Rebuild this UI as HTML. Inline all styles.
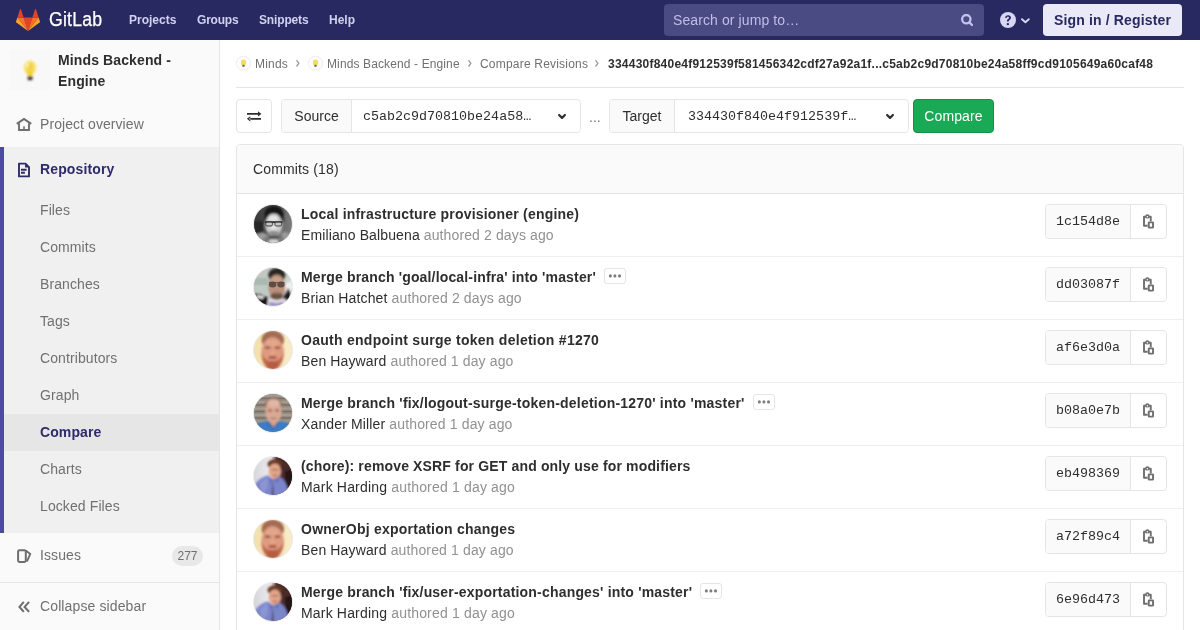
<!DOCTYPE html>
<html>
<head>
<meta charset="utf-8">
<title>Compare Revisions</title>
<style>
*{box-sizing:border-box;margin:0;padding:0}
html,body{width:1200px;height:630px;overflow:hidden;background:#fff}
body{font-family:"Liberation Sans",sans-serif;font-size:14px;color:#2e2e2e;position:relative}
#root{position:absolute;left:0;top:0;width:1200px;height:630px;overflow:hidden;will-change:transform;background:#fff}
.abs{position:absolute}
/* header */
#hdr{position:absolute;left:0;top:0;width:1200px;height:40px;background:#292961}
#hdr .nav{position:absolute;top:12px;height:16px;line-height:16px;font-size:12px;font-weight:700;color:#d1d1f0;white-space:nowrap}
#wordmark{position:absolute;left:49px;top:7px;font-size:20px;line-height:24px;color:#fff;letter-spacing:.2px;white-space:nowrap;transform:scaleX(.885);transform-origin:0 0;-webkit-text-stroke:.25px #fff}
#search{position:absolute;left:664px;top:4px;width:320px;height:32px;border-radius:4px;background:#4b4b83}
#search span{position:absolute;left:9px;top:7px;line-height:18px;font-size:14px;color:#bebee8;white-space:nowrap;letter-spacing:.1px}
#signin{position:absolute;left:1043px;top:4px;width:139px;height:32px;border-radius:4px;background:#e9e9f8;color:#292961;font-weight:700;font-size:14px;line-height:32px;text-align:center;white-space:nowrap;letter-spacing:.15px}
/* sidebar */
#side{position:absolute;left:0;top:40px;width:220px;height:590px;background:#fafafa;border-right:1px solid #e5e5e5}
#side .act{position:absolute;left:0;top:107px;width:219px;height:386px;background:#f0f0f0;border-left:4px solid #4b4ba3}
#side .cur{position:absolute;left:4px;top:374px;width:215px;height:37px;background:#e6e6e6}
#side .it{position:absolute;left:40px;height:20px;line-height:20px;font-size:14px;color:#707070;white-space:nowrap;letter-spacing:.1px}
#side .it.b{font-weight:700;color:#2f2a6b}
#side .ctx{position:absolute;left:58px;top:10px;font-weight:700;font-size:14px;line-height:21px;color:#2e2e2e;letter-spacing:.12px}
#side .pav{position:absolute;left:10px;top:10px;width:40px;height:40px;border-radius:3px;background:#f8f8f8}
#side .badge{position:absolute;left:172px;top:506px;width:31px;height:20px;border-radius:10px;background:#e8e8e8;color:#707070;font-size:12px;line-height:21px;text-align:center}
#side .coll{position:absolute;left:0;top:542px;width:219px;height:48px;border-top:1px solid #e5e5e5;background:#fafafa}
/* breadcrumbs */
#bc{position:absolute;left:236px;top:40px;width:948px;height:48px;border-bottom:1px solid #e5e5e5}
#bc .t{position:absolute;top:16px;height:16px;line-height:16px;font-size:12px;color:#707070;white-space:nowrap}
#bc .t.b{font-weight:700;color:#2e2e2e}
#bc .av{position:absolute;top:15px;width:16px;height:16px;border-radius:50%;border:1px solid #ececec;background:#fbfbf7}
/* form */
.box{position:absolute;border:1px solid #e5e5e5;border-radius:4px;background:#fff}
.addon{position:absolute;left:0;top:0;height:100%;background:#fafafa;border-right:1px solid #e5e5e5;text-align:center;font-size:14px;color:#2e2e2e;border-radius:3px 0 0 3px}
.mono{font-family:"Liberation Mono",monospace;font-size:13.35px;color:#2e2e2e;white-space:nowrap}
#cmp{position:absolute;left:913px;top:99px;width:81px;height:34px;border-radius:4px;background:#1aaa55;border:1px solid #168f48;color:#fff;font-size:14px;line-height:32px;text-align:center;letter-spacing:.1px}
/* panel */
#panel{position:absolute;left:236px;top:144px;width:948px;height:500px;border:1px solid #e5e5e5;border-radius:4px 4px 0 0;background:#fff}
#panel .ph{position:absolute;left:0;top:0;width:946px;height:49px;background:#fafafa;border-bottom:1px solid #e5e5e5;border-radius:3px 3px 0 0}
#panel .ph span{position:absolute;left:16px;top:14px;line-height:21px;font-size:14px;color:#2e2e2e;letter-spacing:.15px}
.row{position:absolute;left:0;width:946px;height:63px;border-bottom:1px solid #eee}
.row .in{position:absolute;left:16px;top:0;width:914px;height:62px}
.row .av{position:absolute;left:0;top:10px;width:40px;height:40px;border-radius:50%;border:1px solid #ececec;overflow:hidden;background:#ddd}
.row .av svg{position:absolute;left:0;top:0;width:38px;height:38px;display:block}
.row .ti{position:absolute;left:48px;top:10px;height:20px;line-height:20px;font-weight:700;font-size:14px;color:#2e2e2e;white-space:nowrap;letter-spacing:.17px}
.row .au{position:absolute;left:48px;top:31px;height:20px;line-height:20px;font-size:14px;color:#2e2e2e;white-space:nowrap}
.row .au i{font-style:normal;color:#919191}
.row .exp{position:absolute;top:11px;width:22px;height:16px;border:1px solid #e5e5e5;border-radius:3px;background:#fff}
.row .exp svg{position:absolute;left:-1px;top:-1px;width:22px;height:16px}
.row .sha{position:absolute;left:792px;top:10px;width:122px;height:35px;border:1px solid #e5e5e5;border-radius:4px;background:#fff}
.row .sha .l{position:absolute;left:0;top:0;width:85px;height:33px;background:#fafafa;border-right:1px solid #e5e5e5;border-radius:3px 0 0 3px;line-height:34px;text-align:center}
.row .sha svg{position:absolute;left:95px;top:9px;width:16px;height:16px}
</style>
</head>
<body>
<div id="root">
<!--DEFS--><svg width="0" height="0" style="position:absolute"><defs>
<filter id="b1" x="-20%" y="-20%" width="140%" height="140%"><feGaussianBlur stdDeviation="1.1"/></filter>
<filter id="b2" x="-20%" y="-20%" width="140%" height="140%"><feGaussianBlur stdDeviation="0.6"/></filter>
<symbol id="a-em" viewBox="0 0 38 38">
 <linearGradient id="gEm" x1="0" x2="1" y1="0" y2="0"><stop offset="0" stop-color="#363636"/><stop offset=".55" stop-color="#5a5a5a"/><stop offset="1" stop-color="#7c7c7c"/></linearGradient>
 <rect width="38" height="38" fill="url(#gEm)"/>
 <g filter="url(#b1)">
  <rect x="0" y="16" width="9" height="14" fill="#262626"/>
  <path d="M-2 40V30l11-2.500000000000001 6 3h9l6-4 10 4v10z" fill="#9b9b9b"/>
  <path d="M10 33l5-3h8l5-2 2 10H8z" fill="#7a7a7a"/>
  <ellipse cx="20" cy="9.500000000000002" rx="9.8" ry="9" fill="#161616"/>
  <rect x="10.5" y="9" width="3" height="9" fill="#1c1c1c"/><rect x="27" y="9" width="2.500000000000001" height="8" fill="#1c1c1c"/>
  <ellipse cx="19.8" cy="20" rx="8.6" ry="11.4" fill="#c9c9c9"/>
  <ellipse cx="19.2" cy="13.6" rx="5.2" ry="3" fill="#e6e6e6"/>
  <ellipse cx="19.500000000000002" cy="22.8" rx="3.4" ry="2.4" fill="#e2e2e2"/>
  <ellipse cx="19.8" cy="28.2" rx="5.6" ry="2.4" fill="#8e8e8e"/>
  <ellipse cx="19.8" cy="32" rx="5.5" ry="1.6" fill="#3c3c3c"/>
  <path d="M16 34.5h7.500000000000001l1 4h-10z" fill="#d8d8d8"/>
 </g>
 <g filter="url(#b2)"><path d="M11 16.3h17.5v1.6H11z" fill="#1e1e1e"/><rect x="11.8" y="16.8" width="6.6" height="4.2" rx="1.4" fill="#bdbdbd" fill-opacity=".55" stroke="#333" stroke-width=".9"/><rect x="21" y="16.8" width="6.6" height="4.2" rx="1.4" fill="#bdbdbd" fill-opacity=".55" stroke="#333" stroke-width=".9"/></g>
</symbol>
<symbol id="a-br" viewBox="0 0 38 38">
 <rect width="38" height="38" fill="#c2c8c4"/>
 <g filter="url(#b1)">
  <rect x="-2" y="10" width="16" height="7" fill="#a9b8b0"/>
  <rect x="-2" y="17" width="16" height="8" fill="#bfcac4"/>
  <rect x="28" y="0" width="12" height="14" fill="#cdd4cf"/>
  <path d="M30 16l10-4v14l-8 8z" fill="#eef0ef"/>
  <path d="M-2 25l9 1 7 4 3 10H-2z" fill="#151517"/>
  <path d="M28 40l2-12 4-8 3 5-1 15z" fill="#1d1d20"/>
  <path d="M3 27l7 1-1 3-6-1z" fill="#e8e8e8"/>
  <ellipse cx="23" cy="7" rx="8.8" ry="7" fill="#2b2522"/>
  <ellipse cx="22.8" cy="19" rx="8.6" ry="12.4" fill="#b9917c"/>
  <ellipse cx="22.5" cy="11.5" rx="5.5" ry="2.6" fill="#c9a28b"/>
  <ellipse cx="22.8" cy="28" rx="6.4" ry="3.6" fill="#6a5144"/>
  <ellipse cx="22.8" cy="24.5" rx="2.6" ry="1.2" fill="#a97f6c"/>
  <path d="M14 31l9 2 9-2 2 9H13z" fill="#ebe6ee"/>
  <path d="M15.500000000000002 33.500000000000004l7 1.5 7-1.5.5 5h-15z" fill="#a28fc2"/>
 </g>
 <g filter="url(#b2)"><ellipse cx="18.6" cy="16.4" rx="3.7" ry="3" fill="#4a3833" opacity=".8"/><ellipse cx="27" cy="16.4" rx="3.7" ry="3" fill="#4a3833" opacity=".8"/><rect x="15" y="14" width="15.500000000000002" height=".9" fill="#5a4842" opacity=".8"/></g>
</symbol>
<symbol id="a-be" viewBox="0 0 38 38">
 <linearGradient id="gBe" x1="0" x2="1" y1="0" y2="0"><stop offset="0" stop-color="#f3e0aa"/><stop offset="1" stop-color="#f8ecc8"/></linearGradient>
 <rect width="38" height="38" fill="url(#gBe)"/>
 <g filter="url(#b1)">
  <ellipse cx="18.8" cy="9" rx="11.2" ry="9.500000000000002" fill="#a36a55"/>
  <ellipse cx="18.6" cy="22" rx="11.4" ry="16" fill="#df9b80"/>
  <ellipse cx="18.6" cy="12" rx="7" ry="3" fill="#e2a78b"/>
  <path d="M7.5 22c.5 10 5 17 11 17s10.5-7 11-17c-2.500000000000001 6-6 8-11 8s-8.5-2-11-8z" fill="#c06a50"/>
  <ellipse cx="18.6" cy="34" rx="6" ry="4" fill="#b65c44"/>
  <ellipse cx="13.6" cy="16.8" rx="3" ry="1.3" fill="#8f5546"/>
  <ellipse cx="23.6" cy="16.8" rx="3" ry="1.3" fill="#8f5546"/>
  <ellipse cx="18.6" cy="21.5" rx="2" ry="1.6" fill="#e8a98c"/>
  <ellipse cx="18.6" cy="26.6" rx="4.4" ry="1.3" fill="#a0483b"/>
 </g>
</symbol>
<symbol id="a-xa" viewBox="0 0 38 38">
 <rect width="38" height="38" fill="#968c82"/>
 <g filter="url(#b2)"><path d="M0 4.500000000000001h38M0 11h38M0 17.5h38M0 24h38M0 30.5h38" stroke="#786f66" stroke-width="1.3"/><path d="M0 1.6h38M0 8h38M0 14.5h38M0 21h38M0 27.5h38" stroke="#a59b91" stroke-width="2.2"/></g>
 <g filter="url(#b1)">
  <path d="M-2 40V32l8-3.500000000000001 7-1.5h13l7 1.5 7 3.500000000000001v8z" fill="#3a7dc6"/>
  <path d="M13 29l6 6 6-6-2-2h-8z" fill="#2d66a8"/>
  <ellipse cx="19.500000000000002" cy="11" rx="8.8" ry="7.500000000000001" fill="#9a7565"/>
  <ellipse cx="19.500000000000002" cy="17.5" rx="8.2" ry="12" fill="#d9a994"/>
  <ellipse cx="19.500000000000002" cy="9" rx="6.2" ry="3.8" fill="#e0b7a6"/>
  <ellipse cx="16" cy="16.6" rx="2.2" ry="1" fill="#85564a"/>
  <ellipse cx="23" cy="16.6" rx="2.2" ry="1" fill="#85564a"/>
  <ellipse cx="19.500000000000002" cy="24.4" rx="3" ry=".9" fill="#b47464"/>
  <path d="M16 29h7l-3.500000000000001 4.500000000000001z" fill="#cc9a85"/>
 </g>
</symbol>
<symbol id="a-ma" viewBox="0 0 38 38">
 <linearGradient id="gMa" x1="0" x2="1" y1="0" y2="0"><stop offset="0" stop-color="#d6d6dc"/><stop offset=".45" stop-color="#ececf0"/><stop offset=".6" stop-color="#5a3434"/><stop offset="1" stop-color="#3a2122"/></linearGradient>
 <rect width="38" height="38" fill="url(#gMa)"/>
 <g filter="url(#b1)">
  <path d="M22 -2h18v42h-9z" fill="#4c2b2c"/>
  <path d="M31 14l9-2v28h-8z" fill="#241415"/>
  <ellipse cx="20.5" cy="7.2" rx="7" ry="4.800000000000001" fill="#6a3a23"/>
  <ellipse cx="20.8" cy="14.2" rx="6.2" ry="7.8" fill="#e2a78c"/>
  <ellipse cx="21" cy="12.8" rx="4" ry="1" fill="#b97b66"/>
  <ellipse cx="21.2" cy="18.4" rx="2.6" ry=".9" fill="#c07062"/>
  <path d="M0 30c2-6 8-10.5 14-11.500000000000002l5 4 6-3c5 2 8 8 9 14l-5 7H4z" fill="#7a85ca"/>
  <path d="M6 26c3-3 6-5 9-6l-2 12-6 6z" fill="#8b95d4"/>
  <path d="M18.6 22.5l1.4 16h-2.6z" fill="#4f4a6e"/>
  <path d="M14 19.500000000000004l5 4-3 3zM25 20l-5 3.500000000000001 4 2.500000000000001z" fill="#6872b8"/>
 </g>
</symbol>
<symbol id="ic-copy" viewBox="0 0 16 16">
 <path d="M6.6 11.75H3V2.8h6.75v4.5" fill="none" stroke="#6e6e6e" stroke-width="1.9" stroke-linejoin="round"/>
 <circle cx="6.4" cy="2.4" r="2.2" fill="#6e6e6e"/><circle cx="6.4" cy="2.7" r=".8" fill="#fff"/>
 <rect x="7.75" y="8.35" width="4.3" height="5.3" rx=".5" fill="#fff" stroke="#6e6e6e" stroke-width="1.9"/>
</symbol>
</defs></svg>
<!--/DEFS-->
<!-- HEADER -->
<div id="hdr">
  <svg class="abs" style="left:16px;top:9px" width="24" height="22" viewBox="0 0 24 22">
    <path d="M12 22 16.4 8.5H7.6z" fill="#e24329"/>
    <path d="M12 22 7.6 8.5H1.4z" fill="#fc6d26"/>
    <path d="M1.4 8.5.05 12.6a.9.9 0 0 0 .33 1L12 22z" fill="#fca326"/>
    <path d="M1.4 8.5h6.2L4.93.3a.46.46 0 0 0-.87 0z" fill="#e24329"/>
    <path d="M12 22 16.4 8.5h6.2z" fill="#fc6d26"/>
    <path d="M22.6 8.5l1.35 4.1a.9.9 0 0 1-.33 1L12 22z" fill="#fca326"/>
    <path d="M22.6 8.5h-6.2L19.07.3a.46.46 0 0 1 .87 0z" fill="#e24329"/>
  </svg>
  <div id="wordmark">GitLab</div>
  <div class="nav" style="left:129px">Projects</div>
  <div class="nav" style="left:197px;letter-spacing:-.2px">Groups</div>
  <div class="nav" style="left:259px;letter-spacing:-.15px">Snippets</div>
  <div class="nav" style="left:329px">Help</div>
  <div id="search"><span>Search or jump to…</span>
    <svg class="abs" style="left:296px;top:10px" width="15" height="14" viewBox="0 0 15 14"><circle cx="6.3" cy="5.2" r="4.2" fill="none" stroke="#c2c2ec" stroke-width="2.3"/><path d="M9.4 8.4l2.6 2.6" stroke="#c2c2ec" stroke-width="2.3" stroke-linecap="round"/></svg>
  </div>
  <svg class="abs" style="left:1000px;top:12px" width="16" height="16" viewBox="0 0 16 16"><circle cx="8" cy="8" r="8" fill="#d7d7f3"/><g transform="translate(8 8) scale(1.13) translate(-8 -7.9)"><path d="M5.500000000000001 6.1c0-1.5 1.1-2.4 2.6-2.4s2.500000000000001.9 2.500000000000001 2.2c0 1-.6 1.5-1.2 1.9-.5.4-.7.6-.7 1.2v.3H7.1v-.5c0-.9.4-1.400000000000001 1-1.8.5-.3.8-.6.8-1.100000000000001s-.4-.8-1-.8-1.100000000000001.4-1.100000000000001 1z" fill="#292961"/><circle cx="7.9" cy="11.5" r="1.05" fill="#292961"/></g></svg>
  <svg class="abs" style="left:1020px;top:16px" width="11" height="9" viewBox="0 0 11 9"><path d="M2 3.2l3.4 3 3.4-3" fill="none" stroke="#d7d7f3" stroke-width="1.9" stroke-linecap="round" stroke-linejoin="round"/></svg>
  <div id="signin">Sign in / Register</div>
</div>

<!-- SIDEBAR -->
<div id="side">
  <div class="pav">
    <svg class="abs" style="left:10px;top:7px" width="20" height="28" viewBox="-2 -2 20 28"><defs><filter id="bl" x="-30%" y="-30%" width="160%" height="160%"><feGaussianBlur stdDeviation=".8"/></filter></defs><g filter="url(#bl)"><ellipse cx="8" cy="8.6" rx="7.4" ry="8" fill="#fbe98a" opacity=".35"/><ellipse cx="8" cy="8.4" rx="5.7" ry="6.5" fill="#f6dc55" opacity=".92"/><path d="M4.4 11.5h7.2l-1.4 6H5.800000000000001z" fill="#f2d235"/><ellipse cx="8" cy="7.5" rx="2.2" ry="3.6" fill="#f1cf3a"/><ellipse cx="5.500000000000001" cy="6.2" rx="1.2" ry="2.4" fill="#fff6bd"/><rect x="5.500000000000001" y="17.3" width="5.2" height="3.9" rx="1.2" fill="#50404f"/></g></svg>
  </div>
  <div class="ctx">Minds Backend -<br>Engine</div>
  <svg class="abs" style="left:16px;top:77px" width="16" height="16" viewBox="0 0 16 16"><path d="M.8 6.800000000000001L8 2l7.2 4.800000000000001" stroke="#6e6e6e" stroke-width="2.1" fill="none" stroke-linejoin="miter"/><path d="M3 6.2V13h10V6.2" stroke="#707070" stroke-width="1.9" fill="none"/><rect x="7.2" y="9.3" width="1.6" height="3.7" fill="#707070"/></svg>
  <div class="it" style="top:74px;letter-spacing:.07px">Project overview</div>
  <div class="act"></div>
  <div class="cur"></div>
  <svg class="abs" style="left:17px;top:122px" width="14" height="16" viewBox="0 0 14 16"><path d="M2 1.6h6.5L12 5.1v9.3H2z" fill="none" stroke="#2f2a6b" stroke-width="1.9" stroke-linejoin="round"/><path d="M8 1.6v4h4z" fill="#2f2a6b"/><path d="M4 7.8h5.6M4 10.7h3.9" stroke="#2f2a6b" stroke-width="1.9"/></svg>
  <div class="it b" style="top:119px;letter-spacing:.14px">Repository</div>
  <div class="it" style="top:160px">Files</div>
  <div class="it" style="top:197px">Commits</div>
  <div class="it" style="top:234px">Branches</div>
  <div class="it" style="top:271px">Tags</div>
  <div class="it" style="top:308px">Contributors</div>
  <div class="it" style="top:345px">Graph</div>
  <div class="it b" style="top:382px">Compare</div>
  <div class="it" style="top:419px">Charts</div>
  <div class="it" style="top:456px">Locked Files</div>
  <svg class="abs" style="left:16px;top:508px" width="16" height="16" viewBox="0 0 16 16"><rect x="2.1" y="2.2" width="7.7" height="11.7" rx="1.4" fill="none" stroke="#6e6e6e" stroke-width="2"/><path d="M10.4 2.9l3.9 3-3.100000000000001 6.9" fill="none" stroke="#6e6e6e" stroke-width="1.9" stroke-linejoin="round" stroke-linecap="round"/></svg>
  <div class="it" style="top:505px">Issues</div>
  <div class="badge">277</div>
  <div class="coll">
    <svg class="abs" style="left:17px;top:18px" width="14" height="13" viewBox="0 0 14 13"><path d="M6.8 .9L2.500000000000001 5.9l4.3 5M12.1 .9L7.6 5.9l4.5 5" fill="none" stroke="#6e6e6e" stroke-width="2.1" stroke-linecap="butt" stroke-linejoin="miter"/></svg>
    <div class="it" style="top:13px;letter-spacing:.12px">Collapse sidebar</div>
  </div>
</div>

<!-- BREADCRUMBS -->
<div id="bc">
  <svg class="abs" style="left:0px;top:15px" width="16" height="17" viewBox="0 0 16 17"><circle cx="7.5" cy="8.3" r="7.1" fill="#fdfdfb" stroke="#ececf0" stroke-width="1"/><g filter="url(#b2)"><ellipse cx="7.5" cy="7.4" rx="2.7" ry="3" fill="#f3df55"/><rect x="6.3" y="9.8" width="2.4" height="2" rx=".6" fill="#6a6a60"/></g></svg>
  <div class="t" style="left:19px;letter-spacing:.2px">Minds</div>
  <svg class="abs" style="left:58.5px;top:19px" width="6" height="9" viewBox="0 0 6 9"><path d="M1.8 1.6l2.1 2.7-2.1 2.7" fill="none" stroke="#9a9a9a" stroke-width="1.3" stroke-linecap="round" stroke-linejoin="round"/></svg>
  <svg class="abs" style="left:72px;top:15px" width="16" height="17" viewBox="0 0 16 17"><circle cx="7.5" cy="8.3" r="7.1" fill="#fdfdfb" stroke="#ececf0" stroke-width="1"/><g filter="url(#b2)"><ellipse cx="7.5" cy="7.4" rx="2.7" ry="3" fill="#f3df55"/><rect x="6.3" y="9.8" width="2.4" height="2" rx=".6" fill="#6a6a60"/></g></svg>
  <div class="t" style="left:91px;letter-spacing:.12px">Minds Backend - Engine</div>
  <svg class="abs" style="left:230.5px;top:19px" width="6" height="9" viewBox="0 0 6 9"><path d="M1.8 1.6l2.1 2.7-2.1 2.7" fill="none" stroke="#9a9a9a" stroke-width="1.3" stroke-linecap="round" stroke-linejoin="round"/></svg>
  <div class="t" style="left:244px;letter-spacing:.2px">Compare Revisions</div>
  <svg class="abs" style="left:358px;top:19px" width="6" height="9" viewBox="0 0 6 9"><path d="M1.8 1.6l2.1 2.7-2.1 2.7" fill="none" stroke="#9a9a9a" stroke-width="1.3" stroke-linecap="round" stroke-linejoin="round"/></svg>
  <div class="t b" style="left:372px;letter-spacing:.234px">334430f840e4f912539f581456342cdf27a92a1f...c5ab2c9d70810be24a58ff9cd9105649a60caf48</div>
</div>

<!-- COMPARE FORM -->
<div class="box" style="left:236px;top:99px;width:36px;height:34px">
  <svg class="abs" style="left:0;top:0" width="34" height="32" viewBox="0 0 34 32"><path d="M10 13.05h11.5v1.7H10zM21 11.2l3.4 2.7-3.4 2.6zM12.5 17.95H24v1.7H12.5zM13.3 16.2L9.9 18.8l3.4 2.6z" fill="#2e2e2e"/></svg>
</div>
<div class="box" style="left:281px;top:99px;width:300px;height:34px">
  <div class="addon" style="width:70px;line-height:32px">Source</div>
  <div class="abs mono" style="left:81px;top:8px;line-height:18px">c5ab2c9d70810be24a58…</div>
  <svg class="abs" style="left:275px;top:12px" width="11" height="8" viewBox="0 0 11 8"><path d="M2.1 3l2.9 2.9L7.9 3" fill="none" stroke="#2e2e2e" stroke-width="2.2" stroke-linecap="round" stroke-linejoin="round"/></svg>
</div>
<div class="abs" style="left:589px;top:108px;line-height:18px;font-size:14px;color:#707070">...</div>
<div class="box" style="left:609px;top:99px;width:300px;height:34px">
  <div class="addon" style="width:65px;line-height:32px">Target</div>
  <div class="abs mono" style="left:78px;top:8px;line-height:18px">334430f840e4f912539f…</div>
  <svg class="abs" style="left:275px;top:12px" width="11" height="8" viewBox="0 0 11 8"><path d="M2.1 3l2.9 2.9L7.9 3" fill="none" stroke="#2e2e2e" stroke-width="2.2" stroke-linecap="round" stroke-linejoin="round"/></svg>
</div>
<div id="cmp">Compare</div>

<!-- PANEL -->
<div id="panel">
  <div class="ph"><span>Commits (18)</span></div>
  <!--ROWS-->
  <div class="row" style="top:49px"><div class="in">
    <div class="av"><svg viewBox="0 0 38 38"><use href="#a-em"/></svg></div>
    <div class="ti" style="letter-spacing:0.2px">Local infrastructure provisioner (engine)</div>
    <div class="au" style="letter-spacing:0.12px">Emiliano Balbuena <i>authored 2 days ago</i></div>
    <div class="sha"><div class="l mono">1c154d8e</div><svg viewBox="0 0 16 16"><use href="#ic-copy"/></svg></div>
  </div></div>
  <div class="row" style="top:112px"><div class="in">
    <div class="av"><svg viewBox="0 0 38 38"><use href="#a-br"/></svg></div>
    <div class="ti" style="letter-spacing:0.155px">Merge branch 'goal/local-infra' into 'master'</div><div class="exp" style="left:351px"><svg viewBox="0 0 22 16"><circle cx="6.35" cy="7.9" r="1.55" fill="#7d7d7d"/><circle cx="10.9" cy="7.9" r="1.55" fill="#7d7d7d"/><circle cx="15.500000000000002" cy="7.9" r="1.55" fill="#7d7d7d"/></svg></div>
    <div class="au" style="letter-spacing:0.132px">Brian Hatchet <i>authored 2 days ago</i></div>
    <div class="sha"><div class="l mono">dd03087f</div><svg viewBox="0 0 16 16"><use href="#ic-copy"/></svg></div>
  </div></div>
  <div class="row" style="top:175px"><div class="in">
    <div class="av"><svg viewBox="0 0 38 38"><use href="#a-be"/></svg></div>
    <div class="ti" style="letter-spacing:0.27px">Oauth endpoint surge token deletion #1270</div>
    <div class="au" style="letter-spacing:0.13px">Ben Hayward <i>authored 1 day ago</i></div>
    <div class="sha"><div class="l mono">af6e3d0a</div><svg viewBox="0 0 16 16"><use href="#ic-copy"/></svg></div>
  </div></div>
  <div class="row" style="top:238px"><div class="in">
    <div class="av"><svg viewBox="0 0 38 38"><use href="#a-xa"/></svg></div>
    <div class="ti" style="letter-spacing:0.206px">Merge branch 'fix/logout-surge-token-deletion-1270' into 'master'</div><div class="exp" style="left:500px"><svg viewBox="0 0 22 16"><circle cx="6.35" cy="7.9" r="1.55" fill="#7d7d7d"/><circle cx="10.9" cy="7.9" r="1.55" fill="#7d7d7d"/><circle cx="15.500000000000002" cy="7.9" r="1.55" fill="#7d7d7d"/></svg></div>
    <div class="au" style="letter-spacing:0.14px">Xander Miller <i>authored 1 day ago</i></div>
    <div class="sha"><div class="l mono">b08a0e7b</div><svg viewBox="0 0 16 16"><use href="#ic-copy"/></svg></div>
  </div></div>
  <div class="row" style="top:301px"><div class="in">
    <div class="av"><svg viewBox="0 0 38 38"><use href="#a-ma"/></svg></div>
    <div class="ti" style="letter-spacing:0.151px">(chore): remove XSRF for GET and only use for modifiers</div>
    <div class="au" style="letter-spacing:0.175px">Mark Harding <i>authored 1 day ago</i></div>
    <div class="sha"><div class="l mono">eb498369</div><svg viewBox="0 0 16 16"><use href="#ic-copy"/></svg></div>
  </div></div>
  <div class="row" style="top:364px"><div class="in">
    <div class="av"><svg viewBox="0 0 38 38"><use href="#a-be"/></svg></div>
    <div class="ti" style="letter-spacing:0.239px">OwnerObj exportation changes</div>
    <div class="au" style="letter-spacing:0.14px">Ben Hayward <i>authored 1 day ago</i></div>
    <div class="sha"><div class="l mono">a72f89c4</div><svg viewBox="0 0 16 16"><use href="#ic-copy"/></svg></div>
  </div></div>
  <div class="row" style="top:427px"><div class="in">
    <div class="av"><svg viewBox="0 0 38 38"><use href="#a-ma"/></svg></div>
    <div class="ti" style="letter-spacing:0.188px">Merge branch 'fix/user-exportation-changes' into 'master'</div><div class="exp" style="left:447px"><svg viewBox="0 0 22 16"><circle cx="6.35" cy="7.9" r="1.55" fill="#7d7d7d"/><circle cx="10.9" cy="7.9" r="1.55" fill="#7d7d7d"/><circle cx="15.500000000000002" cy="7.9" r="1.55" fill="#7d7d7d"/></svg></div>
    <div class="au" style="letter-spacing:0.175px">Mark Harding <i>authored 1 day ago</i></div>
    <div class="sha"><div class="l mono">6e96d473</div><svg viewBox="0 0 16 16"><use href="#ic-copy"/></svg></div>
  </div></div>
<!--/ROWS-->
</div>
</div>
</body>
</html>
